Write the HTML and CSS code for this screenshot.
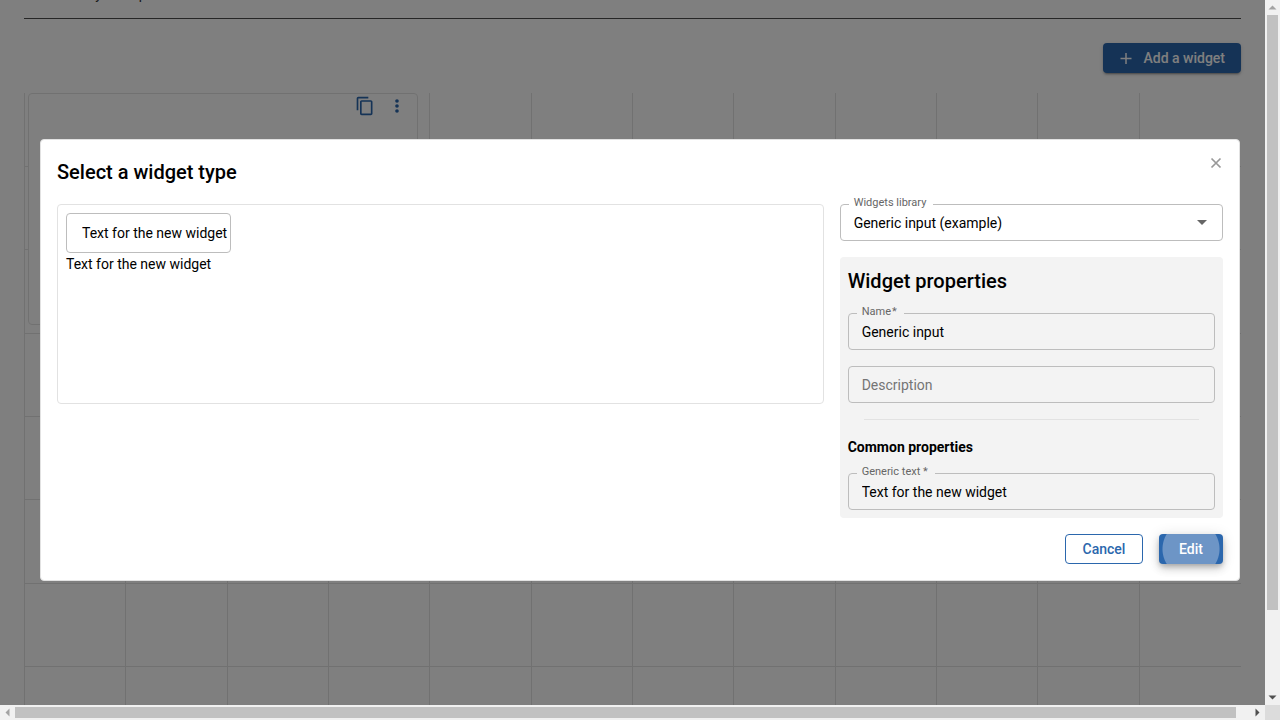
FILE: index.html
```
<!DOCTYPE html>
<html lang="en">
<head>
<meta charset="utf-8">
<title>Select a widget type</title>
<link rel="stylesheet" href="styles.css">
</head>
<body>
<div class="shell">
  <main class="page">
    <header class="page-header"><p class="path">Dashboard y in an p</p></header>
    <div class="toolbar">
      <button class="btn btn-primary btn-add" type="button">
        <svg width="16" height="16" viewBox="0 0 16 16" aria-hidden="true"><path d="M8 3v11M2.500 8.500h11" fill="none" stroke="currentColor" stroke-width="1.500"/></svg>
        Add a widget
      </button>
    </div>
    <section class="board">
      <div class="columns"><i></i><i></i><i></i><i></i><i></i><i></i><i></i><i></i><i></i><i></i><i></i><i></i></div>
      <div class="rows"><i></i><i></i><i></i><i></i><i></i><i></i><i></i></div>
      <article class="tile">
        <button class="icon-btn" type="button" aria-label="Duplicate">
          <svg width="20" height="20" viewBox="0 0 24 24" fill="currentColor"><path d="M16 1H4C2.900 1 2 1.900 2 3v14h2V3h12V1zm3 4H8c-1.100 0-2 .9-2 2v14c0 1.100.9 2 2 2h11c1.100 0 2-.9 2-2V7c0-1.100-.9-2-2-2zm0 16H8V7h11v14z"/></svg>
        </button>
        <button class="icon-btn" type="button" aria-label="More">
          <svg width="20" height="20" viewBox="0 0 24 24" fill="currentColor"><circle cx="12" cy="6" r="2.200"/><circle cx="12" cy="12" r="2.200"/><circle cx="12" cy="18" r="2.200"/></svg>
        </button>
      </article>
    </section>
  </main>
  <div class="vbar" aria-hidden="true">
    <svg width="15" height="15"><path d="M7.500 5.500l4 4h-8z" fill="#a3a3a3"/></svg>
    <span class="vthumb"></span>
    <svg class="end" width="15" height="15"><path d="M3.500 5.500h8l-4 4z" fill="#505050"/></svg>
  </div>
  <div class="hbar" aria-hidden="true">
    <svg width="15" height="15"><path d="M9.500 3.500v8l-4-4z" fill="#a3a3a3"/></svg>
    <span class="hthumb"></span>
    <svg class="end" width="15" height="15"><path d="M5.500 3.500v8l4-4z" fill="#505050"/></svg>
  </div>
  <div class="corner"></div>
</div>

<div class="backdrop">
  <form class="dialog" role="dialog" aria-labelledby="dialog-title">
    <header class="dialog-header">
      <h1 class="title" id="dialog-title">Select a widget type</h1>
      <button class="close" type="button" aria-label="Close">
        <svg width="14" height="14" viewBox="0 0 14 14"><path d="M2.500 2.500l9 9M11.500 2.500l-9 9" fill="none" stroke="currentColor" stroke-width="1.700"/></svg>
      </button>
    </header>
    <div class="dialog-body">
      <section class="preview">
        <input class="preview-input" aria-label="Preview" value="Text for the new widget">
        <p class="preview-text">Text for the new widget</p>
      </section>
      <div class="side">
        <div class="field">
          <label class="label" for="library">Widgets library</label>
          <select class="control" id="library"><option>Generic input (example)</option></select>
          <svg class="arrow" width="10" height="5" viewBox="0 0 10 5"><path d="M0 0h10L5 5z" fill="#666"/></svg>
        </div>
        <section class="properties">
          <h2 class="title">Widget properties</h2>
          <div class="field">
            <label class="label" for="name">Name<span class="star">*</span></label>
            <input class="control" id="name" value="Generic input">
          </div>
          <div class="field">
            <input class="control" id="description" aria-label="Description" placeholder="Description">
          </div>
          <hr class="divider">
          <h3 class="subtitle">Common properties</h3>
          <div class="field field-close">
            <label class="label" for="generic">Generic text *</label>
            <input class="control" id="generic" value="Text for the new widget">
          </div>
        </section>
      </div>
    </div>
    <footer class="actions">
      <button class="btn btn-outline" type="button">Cancel</button>
      <button class="btn btn-primary btn-edit" type="button"><span class="ripple"></span><span class="btn-text">Edit</span></button>
    </footer>
  </form>
</div>
</body>
</html>
```
FILE: styles.css
```
* { box-sizing: border-box; }
body { margin: 0; font: 14px/20px Roboto, sans-serif; color: #000; }
h1, h2, h3, p { margin: 0; }
button, input, select { font: inherit; color: inherit; }

.shell { display: grid; grid-template: minmax(0, 1fr) 15px / minmax(0, 1fr) 15px; height: 100vh; }
.page { display: flex; flex-direction: column; overflow: hidden; padding: 0 24px; background: #fff; }
.page-header { flex: none; height: 19px; border-bottom: 1px solid #4c4c4c; }
.path { margin-top: -16px; color: #333; }
.toolbar { display: flex; justify-content: flex-end; padding: 24px 0 20px; }
.btn { display: inline-flex; align-items: center; justify-content: center; height: 30px; padding: 0 16px; border: 0; border-radius: 4px; font-weight: 500; }
.btn-primary { background: #2b67ad; color: #fff; box-shadow: 0 3px 1px -2px rgba(0,0,0,.2), 0 2px 2px rgba(0,0,0,.14), 0 1px 5px rgba(0,0,0,.12); }
.btn-add { gap: 9px; padding-left: 15px; }
.board { position: relative; flex: 1; }
.columns, .rows { position: absolute; inset: 0; display: grid; }
.columns { grid-template-columns: repeat(12, 1fr); right: 1px; }
.columns i { border-left: 1px solid #e2e2e2; }
.rows { grid-template-rows: 74px repeat(6, 1fr); bottom: 38px; }
.rows i { border-bottom: 1px solid #e2e2e2; }
.tile { position: relative; display: flex; justify-content: flex-end; align-items: flex-start; gap: 12px; width: calc(32% + 1px); height: 232px; margin-left: 4px; padding: 2px 10px; background: #fff; border: 1px solid #e2e2e2; border-radius: 4px; }
.icon-btn { display: flex; padding: 0; border: 0; background: none; color: #2b67ad; }

.vbar, .hbar { display: flex; z-index: 2; background: #f1f1f1; }
.vbar { flex-direction: column; align-items: center; }
.hbar { align-items: center; }
.vbar svg, .hbar svg { flex: none; }
.vthumb { width: 11px; height: calc(100% - 110px); background: #c1c1c1; }
.hthumb { height: 11px; width: calc(100% - 44px); background: #c1c1c1; }
.vbar .end { margin-top: auto; }
.hbar .end { margin-left: auto; }
.corner { z-index: 2; background: #dcdcdc; }

.backdrop { position: fixed; inset: 0 15px 15px 0; display: flex; align-items: center; padding: 15px 25px 0 40px; background: rgba(0,0,0,.5); }
.dialog { flex: 1; padding: 16px; background: #fff; border: 1px solid #e2e2e2; border-radius: 4px; }
.dialog-header { display: flex; justify-content: space-between; align-items: flex-start; padding-bottom: 16px; }
.title { font-size: 20px; line-height: 32px; font-weight: 500; }
.close { display: flex; padding: 0; border: 0; background: none; color: #999; }
.dialog-body { display: grid; grid-template-columns: 2fr 1fr; gap: 16px; align-items: start; }
.preview { height: 200px; padding: 8px; border: 1px solid #e2e2e2; border-radius: 4px; }
.preview-input { display: block; width: 165px; height: 40px; padding: 0 0 0 15px; border: 1px solid #bdbdbd; border-radius: 4px; }
.preview-text { padding-top: 1px; }
.side { display: grid; gap: 16px; min-width: 0; }
.field { position: relative; background: inherit; }
.label { position: absolute; top: -9px; left: 9px; padding: 0 7px 0 5px; background: inherit; color: #666; font-size: 11px; line-height: 16px; }
.side > .field { background: #fff; }
.star { padding-left: 1px; }
.control { display: block; width: 100%; height: 37px; padding: 1px 13px 0; border: 1px solid #bdbdbd; border-radius: 4px; background: transparent; appearance: none; outline: 0; }
.control::placeholder { color: #757575; opacity: 1; }
.arrow { position: absolute; right: 16px; top: 16px; }
.properties { display: flex; flex-direction: column; padding: 8px; border-radius: 4px; background: #f3f3f3; }
.properties .field { margin-top: 16px; }
.properties .field-close { margin-top: 15px; }
.divider { align-self: stretch; margin: 16px; height: 1px; border: 0; background: #e2e2e2; }
.subtitle { font-size: 14px; line-height: 22px; font-weight: 700; }
.actions { display: flex; justify-content: flex-end; gap: 16px; padding-top: 16px; }
.btn-outline { min-width: 78px; border: 1px solid #2b67ad; background: #fff; color: #2b67ad; }
.btn-edit { position: relative; overflow: visible; width: 64px; box-shadow: 0 3px 5px -1px rgba(0,0,0,.2), 0 5px 8px rgba(0,0,0,.14), 0 1px 14px rgba(0,0,0,.12); }
.ripple { position: absolute; inset: 0; border-radius: 4px; background: radial-gradient(circle at center, #6d95c6 28px, transparent 29px); }
.btn-text { position: relative; }
```
